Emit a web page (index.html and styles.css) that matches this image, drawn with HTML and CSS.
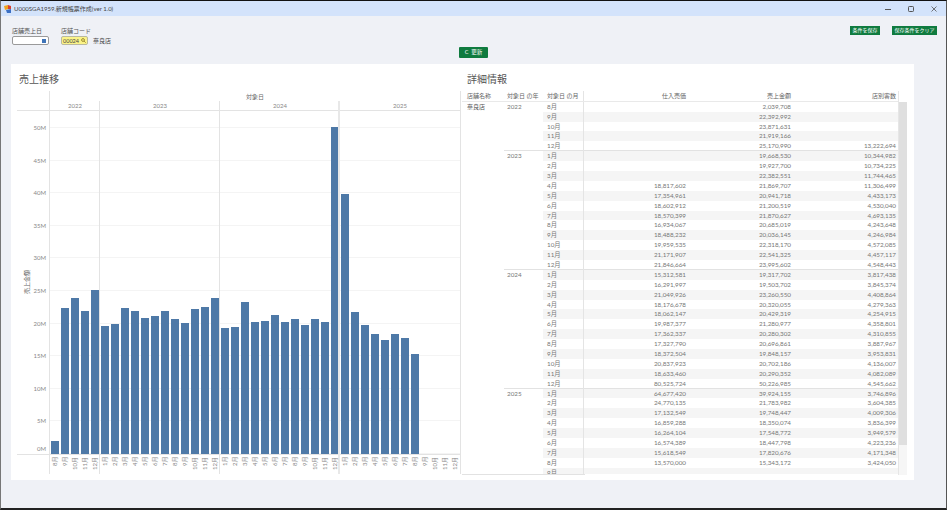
FILE: index.html
```html
<!DOCTYPE html>
<html lang="ja">
<head>
    <meta charset="UTF-8">
    <meta name="viewport" content="width=device-width, initial-scale=1.0">
    <title>U000SGA1959.新規帳票作成</title>
    <link rel="stylesheet" href="styles.css">
</head>
<body>
    <div class="window">
        <div class="titlebar">
            <svg class="app-icon" viewBox="0 0 8 8" width="8" height="8">
                <path d="M0 1 L4 0 L4 4 L1 5 Z" fill="#f0a31c"/>
                <path d="M4 0 L7 1 L7 4 L4 4 Z" fill="#d8402f"/>
                <path d="M2 5 L7 4 L7 8 L3 8 Z" fill="#3b6fc4"/>
            </svg>
            <span class="app-title">U000SGA1959.新規帳票作成(ver 1.0)</span>
            <div class="window-controls">
                <svg viewBox="0 0 6 6" width="6" height="6"><path d="M0 3.5 H6" stroke="#555" fill="none"/></svg>
                <svg viewBox="0 0 6 6" width="6" height="6"><rect x="0.5" y="0.5" width="5" height="5" rx="0.8" stroke="#555" fill="none"/></svg>
                <svg viewBox="0 0 6 6" width="6" height="6"><path d="M0.5 0.5 L5.5 5.5 M5.5 0.5 L0.5 5.5" stroke="#555" stroke-width="0.8" fill="none"/></svg>
            </div>
        </div>

        <div class="form">
            <div class="form-top">
                <div class="filters">
                    <div class="filter filter-date">
                        <label>店舗売上日</label>
                        <div class="input input-date"><span class="date-icon"></span></div>
                    </div>
                    <div class="filter filter-store">
                        <label>店舗コード</label>
                        <div class="store-line">
                            <div class="input input-code">
                                <span>00024</span>
                                <svg viewBox="0 0 6 6" width="5" height="5"><circle cx="2.4" cy="2.4" r="1.7" stroke="#8a7a20" fill="none"/><path d="M3.7 3.7 L5.6 5.6" stroke="#8a7a20"/></svg>
                            </div>
                            <span class="store-name">奈良店</span>
                        </div>
                    </div>
                </div>
                <div class="form-actions">
                    <button class="btn btn-save">条件を保存</button>
                    <button class="btn btn-clear">保存条件をクリア</button>
                </div>
            </div>
            <div class="form-update">
                <button class="btn btn-update">C&nbsp;&nbsp;更新</button>
            </div>
        </div>

        <div class="panel">
            <section class="chart-section">
                <h2>売上推移</h2>
                <div class="chart">
                    <div class="corner-title"></div>
                    <div class="plot-title">対象日</div>

                    <div class="corner-year"></div>
                    <div class="year-head y2022">2022</div>
                    <div class="year-head y2023">2023</div>
                    <div class="year-head y2024">2024</div>
                    <div class="year-head y2025">2025</div>

                    <div class="ticks">
                        <div class="tick tick-zero"><span>0M</span><i></i></div>
                        <div class="tick"><span>5M</span><i></i></div>
                        <div class="tick"><span>10M</span><i></i></div>
                        <div class="tick"><span>15M</span><i></i></div>
                        <div class="tick"><span>20M</span><i></i></div>
                        <div class="tick"><span>25M</span><i></i></div>
                        <div class="tick"><span>30M</span><i></i></div>
                        <div class="tick"><span>35M</span><i></i></div>
                        <div class="tick"><span>40M</span><i></i></div>
                        <div class="tick"><span>45M</span><i></i></div>
                        <div class="tick"><span>50M</span><i></i></div>
                    </div>
                    <div class="axis-title turned">売上金額</div>

                    <div class="bars y2022">
                        <div class="bar" style="height:13.3px"></div>
                        <div class="bar" style="height:146px"></div>
                        <div class="bar" style="height:155.6px"></div>
                        <div class="bar" style="height:142.9px"></div>
                        <div class="bar" style="height:164.1px"></div>
                    </div>
                    <div class="bars y2023">
                        <div class="bar" style="height:128.2px"></div>
                        <div class="bar" style="height:129.9px"></div>
                        <div class="bar" style="height:145.9px"></div>
                        <div class="bar" style="height:142.6px"></div>
                        <div class="bar" style="height:136.5px"></div>
                        <div class="bar" style="height:138.2px"></div>
                        <div class="bar" style="height:142.6px"></div>
                        <div class="bar" style="height:134.9px"></div>
                        <div class="bar" style="height:130.6px"></div>
                        <div class="bar" style="height:145.5px"></div>
                        <div class="bar" style="height:147px"></div>
                        <div class="bar" style="height:156.4px"></div>
                    </div>
                    <div class="bars y2024">
                        <div class="bar" style="height:125.9px"></div>
                        <div class="bar" style="height:127.2px"></div>
                        <div class="bar" style="height:151.7px"></div>
                        <div class="bar" style="height:132.5px"></div>
                        <div class="bar" style="height:133.2px"></div>
                        <div class="bar" style="height:138.8px"></div>
                        <div class="bar" style="height:132.2px"></div>
                        <div class="bar" style="height:134.9px"></div>
                        <div class="bar" style="height:129.4px"></div>
                        <div class="bar" style="height:135px"></div>
                        <div class="bar" style="height:132.3px"></div>
                        <div class="bar" style="height:327.5px"></div>
                    </div>
                    <div class="bars y2025">
                        <div class="bar" style="height:260.3px"></div>
                        <div class="bar" style="height:142px"></div>
                        <div class="bar" style="height:128.8px"></div>
                        <div class="bar" style="height:119.6px"></div>
                        <div class="bar" style="height:114.4px"></div>
                        <div class="bar" style="height:120.3px"></div>
                        <div class="bar" style="height:116.2px"></div>
                        <div class="bar" style="height:100px"></div>
                    </div>

                    <div class="corner-month"></div>
                    <div class="months y2022">
                        <span class="turned">8月</span><span class="turned">9月</span><span class="turned">10月</span><span class="turned">11月</span><span class="turned">12月</span>
                    </div>
                    <div class="months y2023">
                        <span class="turned">1月</span><span class="turned">2月</span><span class="turned">3月</span><span class="turned">4月</span><span class="turned">5月</span><span class="turned">6月</span><span class="turned">7月</span><span class="turned">8月</span><span class="turned">9月</span><span class="turned">10月</span><span class="turned">11月</span><span class="turned">12月</span>
                    </div>
                    <div class="months y2024">
                        <span class="turned">1月</span><span class="turned">2月</span><span class="turned">3月</span><span class="turned">4月</span><span class="turned">5月</span><span class="turned">6月</span><span class="turned">7月</span><span class="turned">8月</span><span class="turned">9月</span><span class="turned">10月</span><span class="turned">11月</span><span class="turned">12月</span>
                    </div>
                    <div class="months y2025">
                        <span class="turned">1月</span><span class="turned">2月</span><span class="turned">3月</span><span class="turned">4月</span><span class="turned">5月</span><span class="turned">6月</span><span class="turned">7月</span><span class="turned">8月</span><span class="turned">9月</span><span class="turned">10月</span><span class="turned">11月</span><span class="turned">12月</span>
                    </div>
                </div>
            </section>

            <section class="detail-section">
                <h2>詳細情報</h2>
                <div class="detail">
                    <div class="table">
                        <div class="thead">
                            <div class="col-store">店舗名称</div>
                            <div class="col-year">対象日 の年</div>
                            <div class="col-month">対象日 の月</div>
                            <div class="num">仕入売価</div>
                            <div class="num">売上金額</div>
                            <div class="num num-last">店別客数</div>
                        </div>
                        <div class="tbody">
                            <div class="col-store store-cell">奈良店</div>
                            <div class="groups">
                                <div class="group group-first">
                                    <div class="col-year">2022</div>
                                    <div class="rows">
                                        <div class="row"><div class="col-month">8月</div><div class="num"></div><div class="num">2,039,708</div><div class="num num-last"></div></div>
                                        <div class="row"><div class="col-month">9月</div><div class="num"></div><div class="num">22,392,992</div><div class="num num-last"></div></div>
                                        <div class="row"><div class="col-month">10月</div><div class="num"></div><div class="num">23,871,631</div><div class="num num-last"></div></div>
                                        <div class="row"><div class="col-month">11月</div><div class="num"></div><div class="num">21,919,166</div><div class="num num-last"></div></div>
                                        <div class="row"><div class="col-month">12月</div><div class="num"></div><div class="num">25,170,990</div><div class="num num-last">13,222,694</div></div>
                                    </div>
                                </div>
                                <div class="group">
                                    <div class="col-year">2023</div>
                                    <div class="rows">
                                        <div class="row"><div class="col-month">1月</div><div class="num"></div><div class="num">19,668,530</div><div class="num num-last">10,344,982</div></div>
                                        <div class="row"><div class="col-month">2月</div><div class="num"></div><div class="num">19,927,700</div><div class="num num-last">10,734,225</div></div>
                                        <div class="row"><div class="col-month">3月</div><div class="num"></div><div class="num">22,382,551</div><div class="num num-last">11,744,465</div></div>
                                        <div class="row"><div class="col-month">4月</div><div class="num">18,817,602</div><div class="num">21,869,707</div><div class="num num-last">11,306,499</div></div>
                                        <div class="row"><div class="col-month">5月</div><div class="num">17,354,961</div><div class="num">20,941,718</div><div class="num num-last">4,433,173</div></div>
                                        <div class="row"><div class="col-month">6月</div><div class="num">18,602,912</div><div class="num">21,200,519</div><div class="num num-last">4,530,040</div></div>
                                        <div class="row"><div class="col-month">7月</div><div class="num">18,570,399</div><div class="num">21,870,627</div><div class="num num-last">4,693,135</div></div>
                                        <div class="row"><div class="col-month">8月</div><div class="num">16,934,067</div><div class="num">20,685,019</div><div class="num num-last">4,243,648</div></div>
                                        <div class="row"><div class="col-month">9月</div><div class="num">18,488,232</div><div class="num">20,036,145</div><div class="num num-last">4,246,984</div></div>
                                        <div class="row"><div class="col-month">10月</div><div class="num">19,959,535</div><div class="num">22,318,170</div><div class="num num-last">4,572,085</div></div>
                                        <div class="row"><div class="col-month">11月</div><div class="num">21,171,907</div><div class="num">22,541,325</div><div class="num num-last">4,457,117</div></div>
                                        <div class="row"><div class="col-month">12月</div><div class="num">21,846,664</div><div class="num">23,995,602</div><div class="num num-last">4,548,443</div></div>
                                    </div>
                                </div>
                                <div class="group">
                                    <div class="col-year">2024</div>
                                    <div class="rows">
                                        <div class="row"><div class="col-month">1月</div><div class="num">15,312,581</div><div class="num">19,317,702</div><div class="num num-last">3,817,438</div></div>
                                        <div class="row"><div class="col-month">2月</div><div class="num">16,291,997</div><div class="num">19,503,702</div><div class="num num-last">3,845,374</div></div>
                                        <div class="row"><div class="col-month">3月</div><div class="num">21,049,926</div><div class="num">23,260,550</div><div class="num num-last">4,408,864</div></div>
                                        <div class="row"><div class="col-month">4月</div><div class="num">18,176,678</div><div class="num">20,320,055</div><div class="num num-last">4,279,363</div></div>
                                        <div class="row"><div class="col-month">5月</div><div class="num">18,062,147</div><div class="num">20,429,319</div><div class="num num-last">4,254,915</div></div>
                                        <div class="row"><div class="col-month">6月</div><div class="num">19,987,377</div><div class="num">21,280,977</div><div class="num num-last">4,358,801</div></div>
                                        <div class="row"><div class="col-month">7月</div><div class="num">17,362,337</div><div class="num">20,280,302</div><div class="num num-last">4,310,855</div></div>
                                        <div class="row"><div class="col-month">8月</div><div class="num">17,327,790</div><div class="num">20,696,861</div><div class="num num-last">3,887,967</div></div>
                                        <div class="row"><div class="col-month">9月</div><div class="num">18,372,504</div><div class="num">19,848,157</div><div class="num num-last">3,953,831</div></div>
                                        <div class="row"><div class="col-month">10月</div><div class="num">20,837,923</div><div class="num">20,702,186</div><div class="num num-last">4,136,007</div></div>
                                        <div class="row"><div class="col-month">11月</div><div class="num">18,633,460</div><div class="num">20,290,352</div><div class="num num-last">4,082,089</div></div>
                                        <div class="row"><div class="col-month">12月</div><div class="num">80,525,724</div><div class="num">50,226,985</div><div class="num num-last">4,545,662</div></div>
                                    </div>
                                </div>
                                <div class="group">
                                    <div class="col-year">2025</div>
                                    <div class="rows">
                                        <div class="row"><div class="col-month">1月</div><div class="num">64,677,420</div><div class="num">39,924,155</div><div class="num num-last">3,746,896</div></div>
                                        <div class="row"><div class="col-month">2月</div><div class="num">24,770,135</div><div class="num">21,783,982</div><div class="num num-last">3,604,385</div></div>
                                        <div class="row"><div class="col-month">3月</div><div class="num">17,132,549</div><div class="num">19,748,447</div><div class="num num-last">4,009,306</div></div>
                                        <div class="row"><div class="col-month">4月</div><div class="num">16,859,288</div><div class="num">18,350,074</div><div class="num num-last">3,836,399</div></div>
                                        <div class="row"><div class="col-month">5月</div><div class="num">16,264,104</div><div class="num">17,548,772</div><div class="num num-last">3,949,579</div></div>
                                        <div class="row"><div class="col-month">6月</div><div class="num">16,574,389</div><div class="num">18,447,798</div><div class="num num-last">4,223,236</div></div>
                                        <div class="row"><div class="col-month">7月</div><div class="num">15,618,549</div><div class="num">17,820,676</div><div class="num num-last">4,171,348</div></div>
                                        <div class="row"><div class="col-month">8月</div><div class="num">13,570,000</div><div class="num">15,343,172</div><div class="num num-last">3,424,050</div></div>
                                        <div class="row"><div class="col-month">9月</div><div class="num"></div><div class="num"></div><div class="num num-last"></div></div>
                                    </div>
                                </div>
                            </div>
                        </div>
                        <div class="table-foot"></div>
                    </div>
                    <div class="scroll"><div class="thumb"></div></div>
                </div>
            </section>
        </div>
    </div>
</body>
</html>
```

FILE: styles.css
```css
* {
    box-sizing: border-box;
}
body {
    margin: 0;
    font-family: "Lato", "Noto Sans CJK JP", sans-serif;
    color: #666;
    background: #eff1f6;
}
.window {
    width: 947px;
    height: 510px;
    overflow: hidden;
    background: #eff1f6;
    border-top: 1px solid #111;
    border-bottom: 2px solid #222;
    border-left: 1px solid #777;
    border-right: 1px solid #555;
}

/* title bar */
.titlebar {
    height: 15px;
    display: flex;
    align-items: center;
    padding-left: 3px;
    background: #d3e3fb;
}
.app-icon {
    margin-right: 2px;
}
.app-title {
    font-size: 6px;
    line-height: 8px;
    color: #444;
}
.window-controls {
    margin-left: auto;
    display: flex;
    gap: 17px;
    padding-right: 9px;
}

/* form */
.form {
    height: 48px;
}
.form-top {
    height: 31px;
    display: flex;
    justify-content: space-between;
    padding: 11px 9px 0 11px;
}
.filters {
    display: flex;
    gap: 12px;
}
.filter label {
    display: block;
    font-size: 6px;
    line-height: 8px;
    margin-bottom: 1px;
    color: #555;
}
.filter-date {
    width: 37px;
}
.input {
    height: 9px;
    border-radius: 2px;
    display: flex;
    align-items: center;
}
.input-date {
    width: 37px;
    background: #fff;
    border: 1px solid #9a9a9a;
    justify-content: flex-end;
    padding-right: 2px;
}
.date-icon {
    width: 4px;
    height: 4px;
    background: #3f74b8;
}
.store-line {
    display: flex;
    align-items: center;
    gap: 5px;
}
.input-code {
    width: 27px;
    background: #fbf388;
    border: 1px solid #b9b9a0;
    font-size: 5.5px;
    color: #444;
    justify-content: space-between;
    padding: 0 1px;
}
.store-name {
    font-size: 6px;
    line-height: 8px;
    color: #444;
}
.form-actions {
    display: flex;
    gap: 12px;
    margin-top: -1px;
}
.btn {
    display: block;
    height: 9px;
    padding: 0;
    border: none;
    background: #0f7b3f;
    color: #fff;
    font-family: inherit;
    font-size: 5px;
    line-height: 9px;
    text-align: center;
}
.btn-save {
    width: 30px;
}
.btn-clear {
    width: 45px;
}
.form-update {
    display: flex;
    justify-content: center;
}
.btn-update {
    width: 29px;
    height: 11px;
    line-height: 11px;
    font-size: 5.5px;
    border-radius: 1px;
}

/* main panel */
.panel {
    width: 903px;
    height: 416px;
    margin-left: 10px;
    padding: 9px 0 0 6px;
    background: #fff;
    display: flex;
}
h2 {
    margin: 0;
    height: 18px;
    font-size: 10px;
    line-height: 12px;
    font-weight: 400;
    color: #555;
}
.chart-section {
    width: 444px;
}
.chart-section h2 {
    padding-left: 2px;
}
.detail-section h2 {
    padding-left: 6px;
}

/* chart */
.chart {
    display: grid;
    grid-template-columns: 33px 50px 120px 120px 120px;
    grid-template-rows: 10px 10px 343px 20px;
    font-size: 6px;
    color: #888;
}
.corner-title {
    grid-column: 1;
    grid-row: 1;
}
.plot-title {
    grid-column: 2 / 6;
    grid-row: 1;
    text-align: center;
    line-height: 12px;
    color: #666;
    box-shadow: -1px 0 0 #e3e3e3, 1px 0 0 #e3e3e3;
}
.corner-year {
    grid-column: 1;
    grid-row: 2;
    border-bottom: 1px solid #e3e3e3;
}
.year-head {
    grid-row: 2;
    text-align: center;
    line-height: 9px;
    border-bottom: 1px solid #e3e3e3;
}
.y2022 {
    grid-column: 2;
    box-shadow: -1px 0 0 #e3e3e3;
}
.y2023 {
    grid-column: 3;
    box-shadow: -1px 0 0 #e3e3e3;
}
.y2024 {
    grid-column: 4;
    box-shadow: -1px 0 0 #e3e3e3;
}
.y2025 {
    grid-column: 5;
    box-shadow: -2px 0 0 #e8e8e8, 1px 0 0 #e3e3e3;
}
.ticks {
    grid-column: 1 / 6;
    grid-row: 3;
    display: flex;
    flex-direction: column-reverse;
}
.tick {
    flex: 0 0 32.6px;
    display: flex;
    align-items: flex-end;
}
.tick span {
    width: 29px;
    text-align: right;
    line-height: 8px;
    margin-bottom: -4px;
    position: relative;
    z-index: 1;
    background: #fff;
}
.tick-zero span {
    margin-bottom: 1px;
}
.tick i {
    flex: 1;
    margin-left: 3px;
    border-bottom: 1px solid #f4f4f4;
}
.axis-title {
    grid-column: 1;
    grid-row: 3;
    align-self: center;
    justify-self: start;
    margin-left: 5px;
    color: #666;
    z-index: 1;
}
.turned {
    writing-mode: vertical-rl;
    text-orientation: sideways;
    transform: rotate(180deg);
}
.bars {
    grid-row: 3;
    display: flex;
    align-items: flex-end;
}
.bar {
    flex: 0 0 10px;
    border-left: 0.7px solid transparent;
    border-right: 1.9px solid transparent;
    background: #4e79a7;
    background-clip: padding-box;
}
.corner-month {
    grid-column: 1;
    grid-row: 4;
    border-top: 1px solid #e3e3e3;
}
.months {
    grid-row: 4;
    display: flex;
    border-top: 1px solid #e3e3e3;
}
.months span {
    flex: 0 0 10px;
    height: 16px;
    margin-top: 2px;
    line-height: 9px;
    text-align: end;
    font-size: 6px;
}

/* detail table */
.detail {
    display: flex;
}
.table {
    width: 438px;
    height: 384px;
    padding-left: 1px;
    border-right: 1px solid #e6e6e6;
    font-size: 6.3px;
    color: #777;
}
.thead {
    height: 10.75px;
    display: flex;
    line-height: 9px;
    font-size: 6px;
    color: #666;
    border-bottom: 1.5px solid #e9e9e9;
}
.tbody {
    height: 372px;
    display: flex;
    overflow: hidden;
}
.col-store {
    flex: 0 0 42px;
    padding-left: 5px;
}
.store-cell {
    line-height: 10px;
    font-size: 6px;
    color: #555;
}
.col-year {
    flex: 0 0 39px;
    padding-left: 3px;
}
.col-month {
    flex: 0 0 41px;
    padding-left: 4px;
    border-right: 1px solid #e4e4e4;
}
.num {
    flex: 0 0 105px;
    padding-right: 3px;
    text-align: right;
}
.num-last {
    flex: 0 0 104px;
    padding-right: 2px;
}
.groups {
    flex: 1;
}
.group {
    display: flex;
    box-shadow: 0 -1px 0 #e2e2e2;
    line-height: 9px;
}
.rows {
    flex: 1;
}
.row {
    height: 9.9px;
    display: flex;
    line-height: 9.9px;
}
.row:nth-child(odd) {
    background: #f5f5f5;
}
.group-first .row:nth-child(odd) {
    background: none;
}
.group-first .row:nth-child(even) {
    background: #f5f5f5;
}
.table-foot {
    width: 123px;
    height: 1px;
    background: #e2e2e2;
}
.scroll {
    width: 8px;
    height: 373px;
    margin-top: 11px;
    background: #f6f6f6;
}
.thumb {
    height: 343px;
    background: #dfdfdf;
}
```
